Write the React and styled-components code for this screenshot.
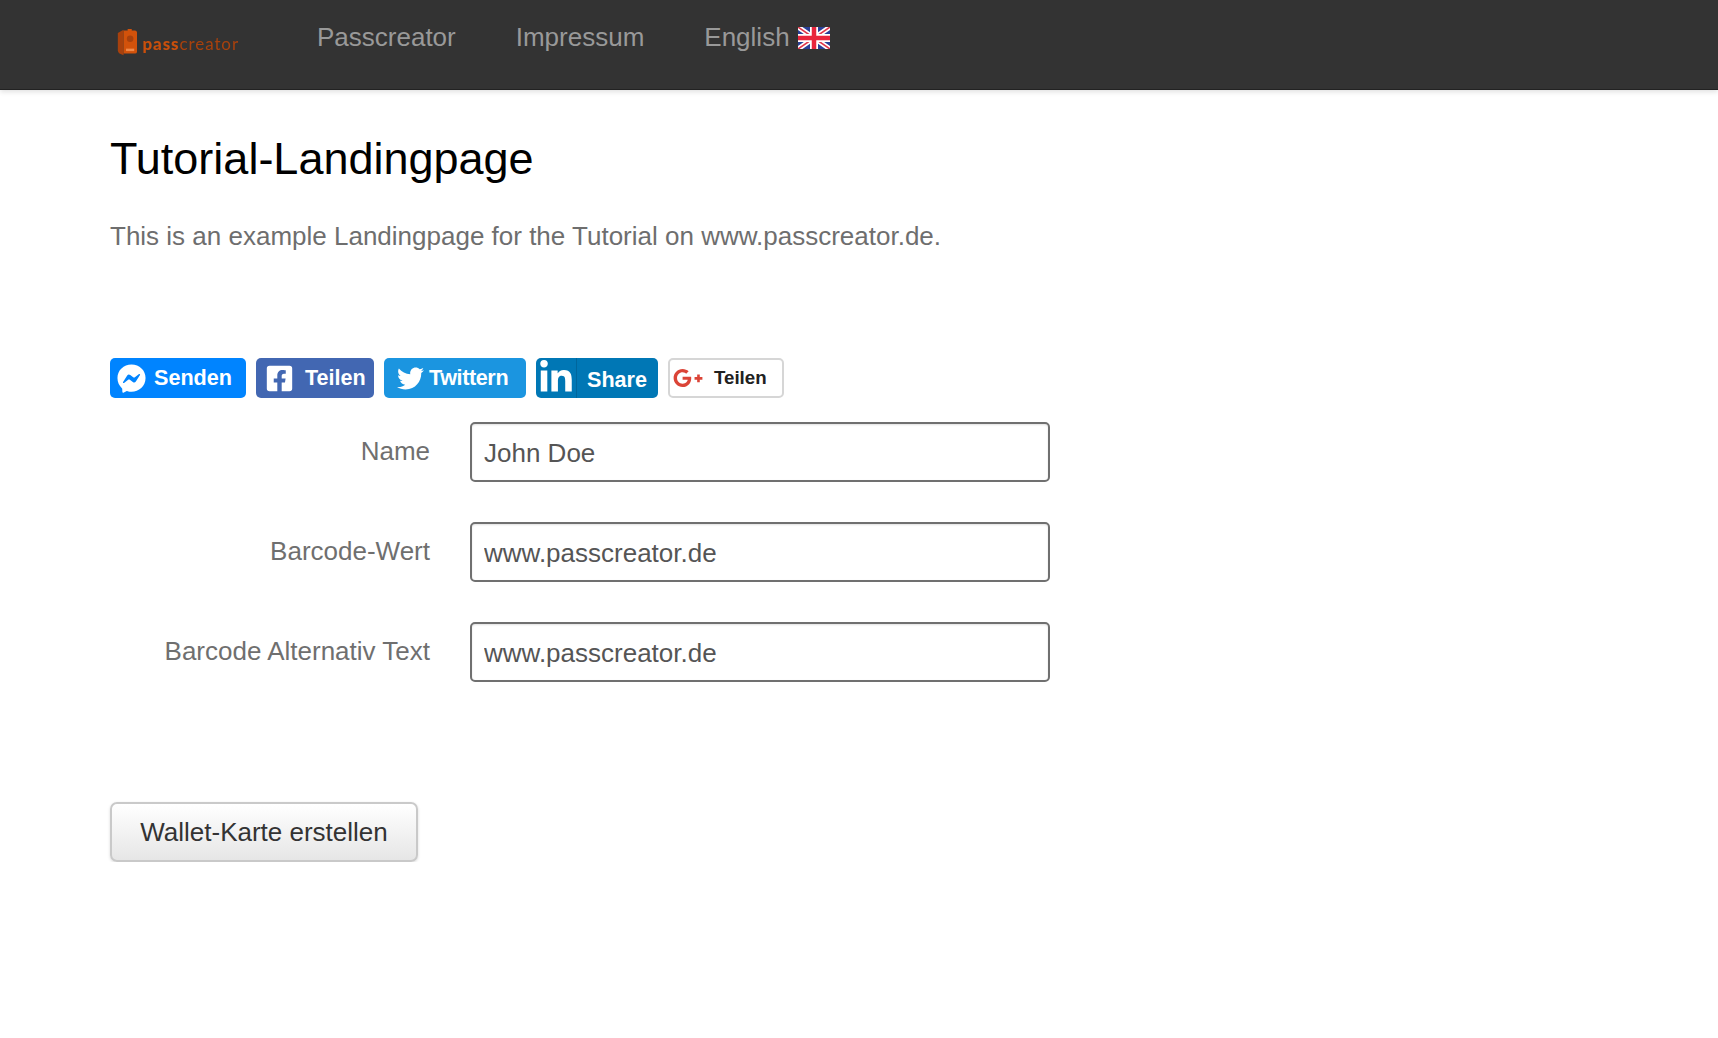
import styled, { createGlobalStyle } from "styled-components";
import {
  FaFacebookMessenger,
  FaFacebookSquare,
  FaTwitter,
  FaLinkedinIn,
  FaGooglePlusG,
} from "react-icons/fa";

const GlobalStyle = createGlobalStyle`
  body {
    margin: 0;
    background: #fff;
    font-family: "Liberation Sans", Arial, sans-serif;
  }
`;

const Header = styled.header`
  display: flex;
  align-items: flex-start;
  height: 89px;
  padding-left: 117px;
  background: #333;
  border-bottom: 1px solid #222;
  box-shadow: 0 2px 5px rgba(0, 0, 0, 0.12);
`;

const Logo = styled.a`
  display: flex;
  align-items: center;
  gap: 5px;
  width: 122px;
  margin-top: 25px;
  margin-right: 78px;
  filter: blur(0.5px);
`;

const LogoText = styled.span`
  font-family: "Lato", sans-serif;
  font-size: 17px;
  letter-spacing: 0.9px;
  margin-top: 2px;
  color: #a8410d;
  b {
    color: #c94f0c;
    font-weight: 900;
  }
`;

const Nav = styled.nav`
  display: flex;
  gap: 60px;
  margin-top: 21px;
`;

const NavLink = styled.a`
  display: flex;
  align-items: center;
  gap: 8px;
  font-size: 26px;
  line-height: 32px;
  color: #999;
`;

const Flag = styled.svg`
  width: 32px;
  height: 22px;
  margin-top: 2px;
  filter: blur(0.4px);
`;

const Main = styled.main`
  padding: 42px 0 0 110px;
`;

const Title = styled.h1`
  margin: 0 0 32px;
  font-size: 45px;
  line-height: 54px;
  font-weight: 400;
  color: #000;
`;

const Intro = styled.p`
  margin: 0 0 104px;
  font-size: 26px;
  line-height: 36px;
  color: #6e6e6e;
`;

const ShareRow = styled.div`
  display: flex;
  gap: 10px;
  margin-bottom: 24px;
`;

const ShareButton = styled.a`
  display: flex;
  align-items: center;
  box-sizing: border-box;
  width: ${(p) => p.$width}px;
  height: 40px;
  padding-left: ${(p) => p.$pad}px;
  gap: ${(p) => p.$gap}px;
  border-radius: 5px;
  background: ${(p) => p.$bg};
  color: #fff;
  font-family: "Liberation Sans", Arial, sans-serif;
  font-weight: 700;
  font-size: 21.6px;
  letter-spacing: ${(p) => p.$spacing || 0}px;
`;

const LinkedInButton = styled(ShareButton)`
  padding-left: 0;
  gap: 0;
`;

const LinkedInIcon = styled.span`
  display: flex;
  align-items: center;
  justify-content: center;
  flex: none;
  width: 41px;
  height: 40px;
  border-right: 1px solid #00669c;
  box-sizing: border-box;
`;

const LinkedInLabel = styled.span`
  margin: 4px 0 0 10px;
`;

const GoogleButton = styled(ShareButton)`
  border: 2px solid #d6d6d6;
  color: #212121;
  font-size: 18.7px;
`;

const Form = styled.form`
  display: grid;
  grid-template-columns: 320px 580px;
  column-gap: 40px;
  row-gap: 40px;
  align-items: center;
`;

const Label = styled.label`
  text-align: right;
  font-size: 26px;
  line-height: 32px;
  color: #6f6f6f;
  margin-top: -2px;
`;

const Input = styled.input`
  box-sizing: border-box;
  width: 100%;
  height: 60px;
  padding: 2px 12px 0;
  border: 2px solid #707070;
  border-radius: 5px;
  outline: none;
  box-shadow: inset 0 1px 2px rgba(0, 0, 0, 0.12);
  font-family: "Liberation Sans", Arial, sans-serif;
  font-size: 26px;
  color: #555;
`;

const SubmitButton = styled.button`
  display: block;
  box-sizing: border-box;
  width: 308px;
  height: 60px;
  margin-top: 120px;
  padding: 0;
  border: 2px solid #c9c9c9;
  border-radius: 7px;
  background: linear-gradient(#fff, #e6e6e6);
  box-shadow: 0 1px 3px rgba(0, 0, 0, 0.15);
  font-family: "Liberation Sans", Arial, sans-serif;
  font-size: 26px;
  color: #333;
`;

const UkFlag = () => (
  <Flag viewBox="0 0 32 22" aria-hidden="true">
    <rect width="32" height="22" fill="#2a3f96" />
    <path d="M0 0L32 22M32 0L0 22" stroke="#fff" strokeWidth="5" />
    <path d="M0 0L32 22M32 0L0 22" stroke="#e0364a" strokeWidth="1.6" />
    <path d="M16 0V22M0 11H32" stroke="#fff" strokeWidth="8" />
    <path d="M16 0V22M0 11H32" stroke="#e8243c" strokeWidth="4.5" />
  </Flag>
);

const LogoMark = () => (
  <svg width="25" height="35" viewBox="0 0 25 35" aria-hidden="true">
    <path d="M1 6 L8 2 V33 L3 31 Q1 30 1 27 Z" fill="#a8410d" />
    <path
      d="M8 3 H13 V1 H18 V3 H22 Q24.500 3 24.500 6 V28 Q24.500 31 22 31 H8 Z"
      fill="#d2520b"
    />
    <circle cx="16" cy="13" r="4" fill="#a8410d" />
    <rect x="11" y="25" width="10" height="3" fill="#f08a4a" />
  </svg>
);

export default function App() {
  return (
    <>
      <GlobalStyle />
      <Header>
        <Logo>
          <LogoMark />
          <LogoText>
            <b>pass</b>creator
          </LogoText>
        </Logo>
        <Nav>
          <NavLink>Passcreator</NavLink>
          <NavLink>Impressum</NavLink>
          <NavLink>
            English <UkFlag />
          </NavLink>
        </Nav>
      </Header>
      <Main>
        <Title>Tutorial-Landingpage</Title>
        <Intro>This is an example Landingpage for the Tutorial on www.passcreator.de.</Intro>
        <ShareRow>
          <ShareButton $bg="#0084ff" $width={136} $pad={7} $gap={8}>
            <FaFacebookMessenger size={29} />
            Senden
          </ShareButton>
          <ShareButton $bg="#4267b2" $width={118} $pad={9} $gap={11}>
            <FaFacebookSquare size={29} />
            Teilen
          </ShareButton>
          <ShareButton $bg="#1b95e0" $width={142} $pad={13} $gap={5} $spacing={-0.4}>
            <FaTwitter size={27} />
            Twittern
          </ShareButton>
          <LinkedInButton $bg="#0077b5" $width={122}>
            <LinkedInIcon>
              <FaLinkedinIn size={36} />
            </LinkedInIcon>
            <LinkedInLabel>Share</LinkedInLabel>
          </LinkedInButton>
          <GoogleButton $bg="#fff" $width={116} $pad={3} $gap={11}>
            <FaGooglePlusG size={30} color="#db4437" />
            Teilen
          </GoogleButton>
        </ShareRow>
        <Form>
          <Label>Name</Label>
          <Input defaultValue="John Doe" />
          <Label>Barcode-Wert</Label>
          <Input defaultValue="www.passcreator.de" />
          <Label>Barcode Alternativ Text</Label>
          <Input defaultValue="www.passcreator.de" />
        </Form>
        <SubmitButton type="button">Wallet-Karte erstellen</SubmitButton>
      </Main>
    </>
  );
}
